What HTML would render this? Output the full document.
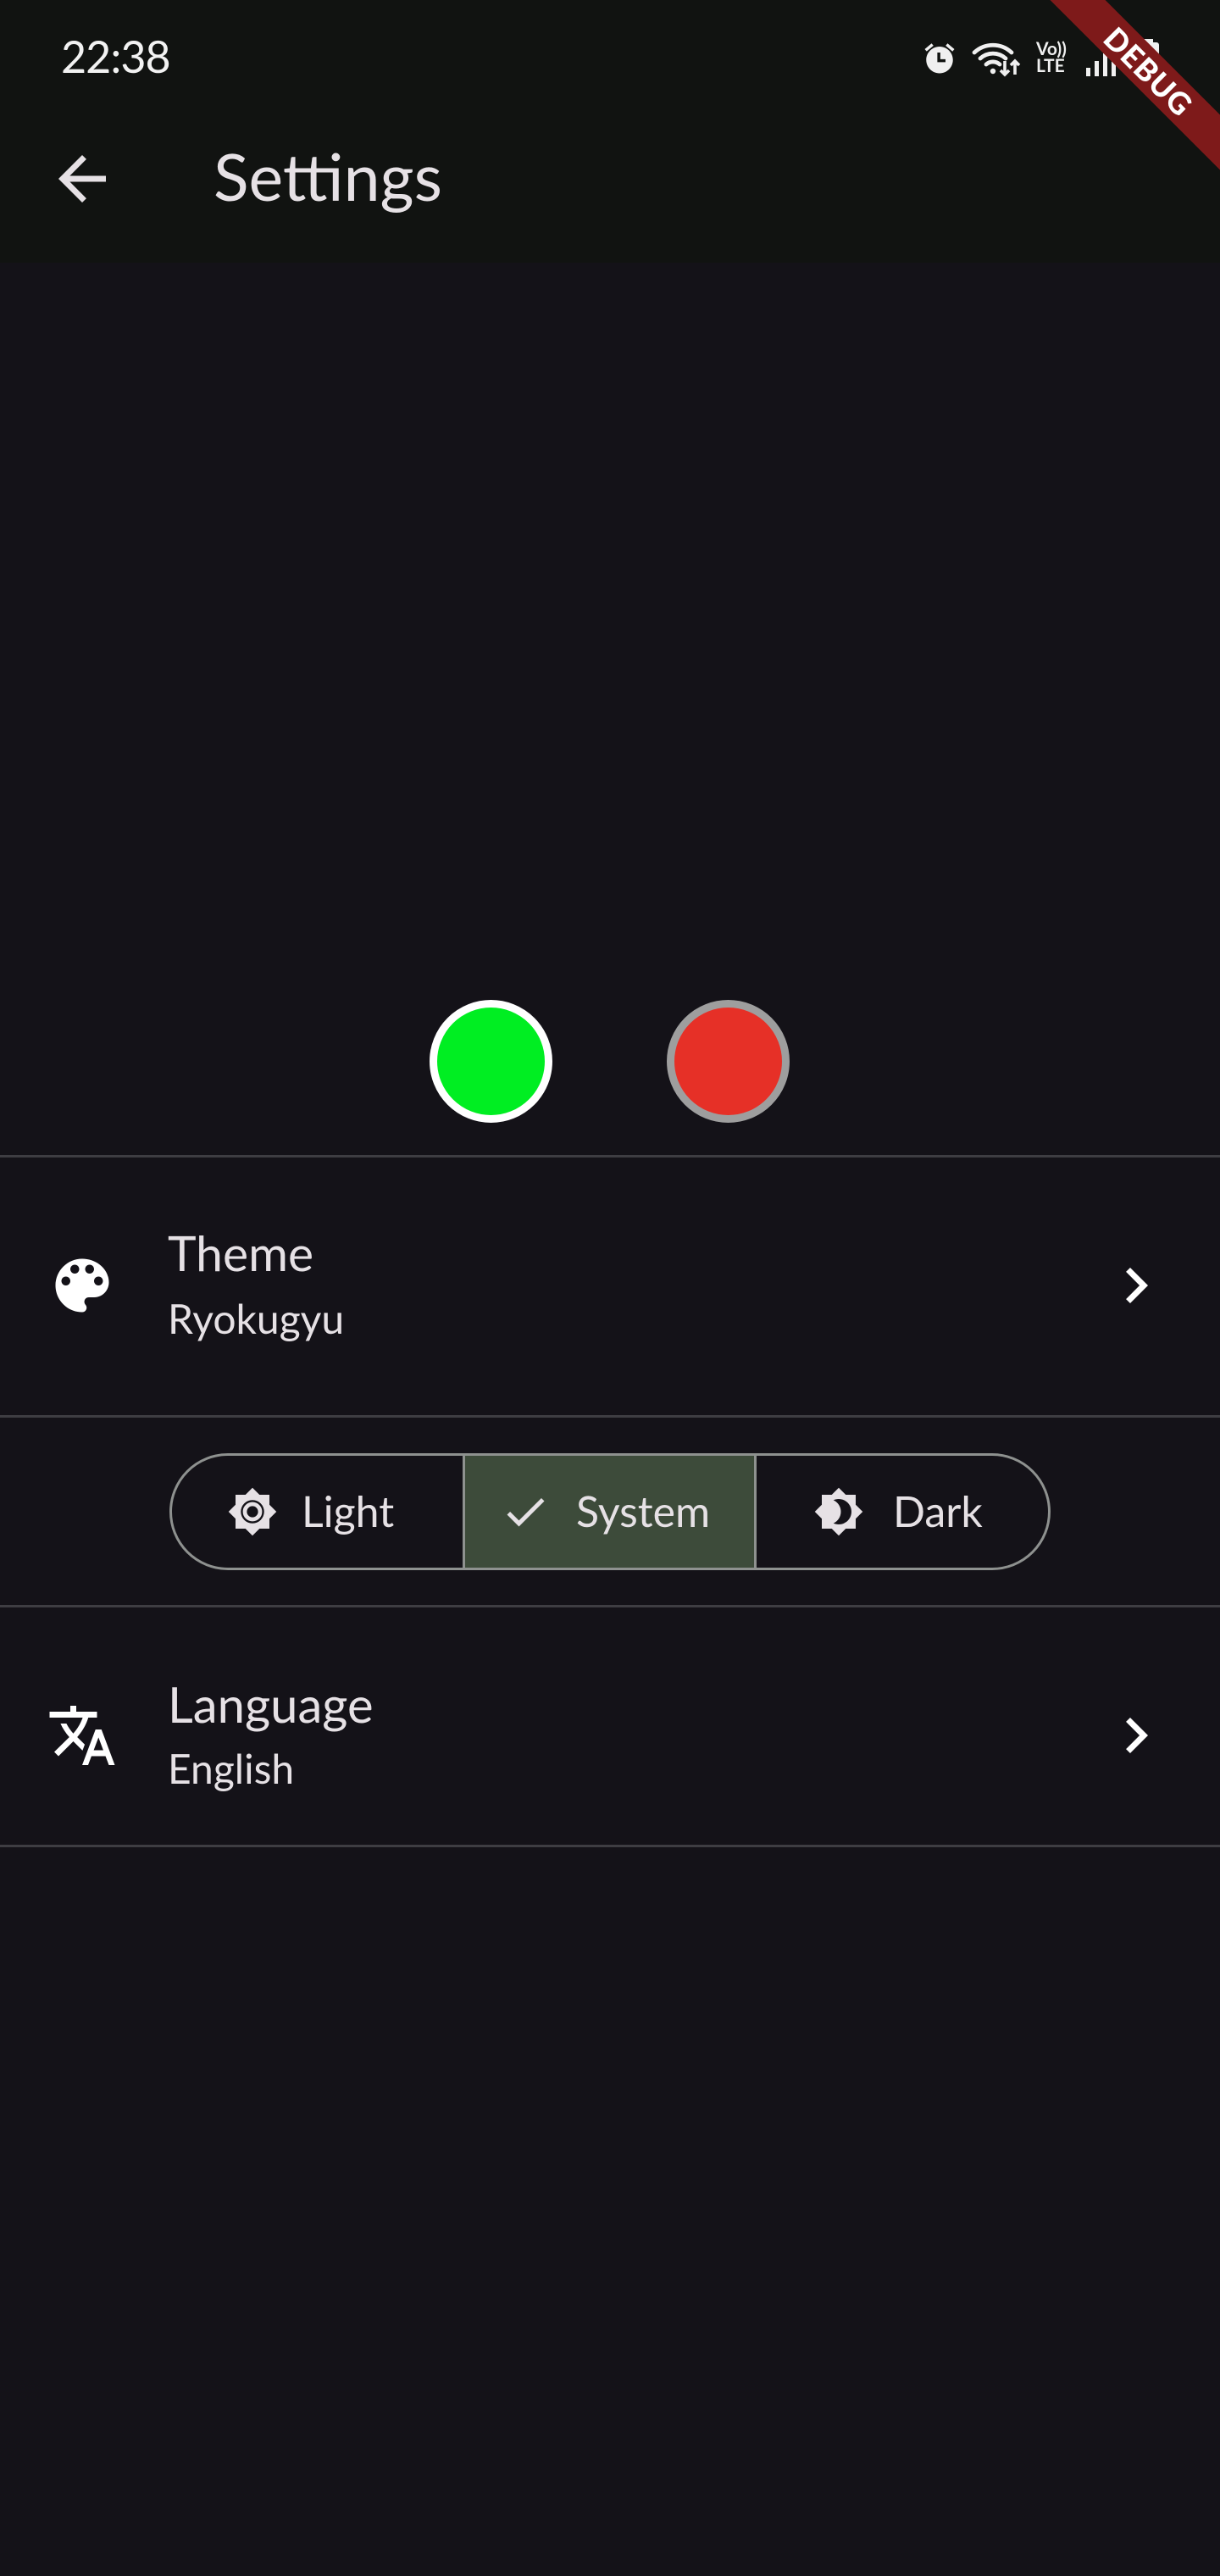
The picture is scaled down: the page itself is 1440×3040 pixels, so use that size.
<!DOCTYPE html>
<html><head><meta charset="utf-8">
<style>
*{margin:0;padding:0;box-sizing:border-box}
body{width:1440px;height:3040px;background:#141218;position:relative;overflow:hidden;font-family:"Lato","Liberation Sans",sans-serif;color:#e6e1e5}
.abs{position:absolute}
.appbar{left:0;top:0;width:1440px;height:310px;background:#111311}
.div{left:0;width:1440px;height:3px;background:#3e3d42}
.t{white-space:nowrap;line-height:1}
</style></head><body>
<div class="abs appbar"></div>
<div class="abs t" style="left:72px;top:41px;font-size:52px;color:#f2f2f2;letter-spacing:-1px">22:38</div>
<!-- status icons -->
<svg class="abs" style="left:1088px;top:48px" width="42" height="42" viewBox="0 0 24 24"><path fill="#f0f0f0" d="M22 5.72l-4.6-3.86-1.29 1.53 4.6 3.86L22 5.72zM7.88 3.39L6.6 1.86 2 5.71l1.29 1.53 4.59-3.85zM12 4c-4.97 0-9 4.03-9 9s4.02 9 9 9c4.97 0 9-4.03 9-9s-4.03-9-9-9z"/><path d="M11.5 8v5.5H16" stroke="#111311" stroke-width="2" fill="none"/></svg>
<svg class="abs" style="left:1146px;top:48px" width="60" height="44" viewBox="0 0 30 22"><path d="M2 7a16 16 0 0 1 22 0M5.5 10.5a11 11 0 0 1 15 0M9 14a6 6 0 0 1 8 0" stroke="#f0f0f0" stroke-width="2.4" fill="none" stroke-linecap="round"/><circle cx="13" cy="18" r="1.6" fill="#f0f0f0"/><path d="M20 12v8M17.5 17.5l2.5 2.5 2.5-2.5M26 20v-8M23.5 14.5l2.5-2.5 2.5 2.5" stroke="#f0f0f0" stroke-width="1.8" fill="none"/></svg>
<div class="abs t" style="left:1223px;top:48px;font-size:21px;font-weight:bold;color:#f0f0f0;line-height:20px">Vo))<br>LTE</div>
<svg class="abs" style="left:1282px;top:54px" width="40" height="36" viewBox="0 0 40 36"><rect x="0" y="26" width="5" height="10" fill="#f0f0f0"/><rect x="10" y="18" width="5" height="18" fill="#f0f0f0"/><rect x="20" y="9" width="5" height="27" fill="#f0f0f0"/><rect x="30" y="0" width="5" height="36" fill="#f0f0f0"/></svg>
<svg class="abs" style="left:1340px;top:46px" width="30" height="48" viewBox="0 0 30 48"><rect x="9" y="0" width="12" height="5" fill="#f0f0f0"/><rect x="2" y="4" width="26" height="44" rx="3" fill="#f0f0f0"/></svg>
<!-- debug banner -->
<div class="abs t" style="left:1156px;top:61px;width:400px;height:46px;background:#7e1a1a;transform:rotate(45deg);color:#fff;font-weight:900;font-size:36px;text-align:center;line-height:46px;letter-spacing:1px">DEBUG</div>
<!-- app bar -->
<svg class="abs" style="left:55px;top:169px" width="84" height="84" viewBox="0 0 24 24"><path fill="#e6e1e5" d="M20 11H7.83l5.59-5.59L12 4l-8 8 8 8 1.41-1.41L7.83 13H20v-2z"/></svg>
<div class="abs t" style="left:252px;top:170px;font-size:77px;color:#e6e1e5">Settings</div>
<!-- circles -->
<div class="abs" style="left:507px;top:1180px;width:145px;height:145px;border-radius:50%;background:#00ee22;border:9px solid #fff"></div>
<div class="abs" style="left:787px;top:1180px;width:145px;height:145px;border-radius:50%;background:#e63027;border:9px solid #9e9e9e"></div>
<div class="abs div" style="top:1363px"></div>
<!-- theme -->
<svg class="abs" style="left:55px;top:1475px" width="84" height="84" viewBox="0 0 24 24"><path fill="#fff" fill-rule="evenodd" d="M12 3c-4.97 0-9 4.03-9 9s4.03 9 9 9c.83 0 1.5-.67 1.5-1.5 0-.39-.15-.74-.39-1.01-.23-.26-.38-.61-.38-.99 0-.83.67-1.5 1.5-1.5H16c2.76 0 5-2.24 5-5 0-4.42-4.03-8-9-8zM6.5 12c-.83 0-1.5-.67-1.5-1.5S5.67 9 6.5 9 8 9.67 8 10.5 7.33 12 6.5 12zM9.5 8C8.67 8 8 7.33 8 6.5S8.67 5 9.5 5s1.5.67 1.5 1.5S10.33 8 9.5 8zM14.5 8c-.83 0-1.5-.67-1.5-1.5S13.67 5 14.5 5s1.5.67 1.5 1.5S15.33 8 14.5 8zM17.5 12c-.83 0-1.5-.67-1.5-1.5S16.67 9 17.5 9s1.5.67 1.5 1.5-.67 1.5-1.5 1.5z"/></svg>
<div class="abs t" style="left:198px;top:1451px;font-size:57px">Theme</div>
<div class="abs t" style="left:198px;top:1533px;font-size:48px;color:#e6e1e5">Ryokugyu</div>
<svg class="abs" style="left:1299px;top:1475px" width="84" height="84" viewBox="0 0 24 24"><path fill="#fff" d="M10 6L8.59 7.41 13.17 12l-4.58 4.59L10 18l6-6z"/></svg>
<div class="abs div" style="top:1670px"></div>
<!-- segmented -->
<div class="abs" style="left:200px;top:1715px;width:1040px;height:138px;border:3px solid #8e918f;border-radius:69px;overflow:hidden">
  <div class="abs" style="left:343px;top:0;width:347px;height:132px;background:#3d4b3a;border-left:3px solid #8e918f;border-right:3px solid #8e918f"></div>
</div>
<svg class="abs" style="left:268px;top:1754px" width="60" height="60" viewBox="0 0 24 24"><path fill="#e6e1e5" d="M20 15.31L23.31 12 20 8.69V4h-4.69L12 .69 8.69 4H4v4.69L.69 12 4 15.31V20h4.69L12 23.31 15.31 20H20v-4.69z"/><circle cx="12" cy="12" r="5.5" fill="#141218"/><circle cx="12" cy="12" r="3.6" fill="none" stroke="#e6e1e5" stroke-width="1.9"/></svg>
<div class="abs t" style="left:356px;top:1758px;font-size:50px">Light</div>
<svg class="abs" style="left:590px;top:1754px" width="60" height="60" viewBox="0 0 24 24"><path fill="#e6e1e5" d="M9 16.17L4.83 12l-1.42 1.41L9 19 21 7l-1.41-1.41z"/></svg>
<div class="abs t" style="left:680px;top:1758px;font-size:50px">System</div>
<svg class="abs" style="left:960px;top:1754px" width="60" height="60" viewBox="0 0 24 24"><path fill="#e6e1e5" d="M20 8.69V4h-4.69L12 .69 8.69 4H4v4.69L.69 12 4 15.31V20h4.69L12 23.31 15.31 20H20v-4.69L23.31 12 20 8.69zM12 18c-.89 0-1.74-.2-2.5-.55C11.56 16.5 13 14.42 13 12s-1.44-4.5-3.5-5.45C10.26 6.2 11.11 6 12 6c3.31 0 6 2.69 6 6s-2.69 6-6 6z"/></svg>
<div class="abs t" style="left:1054px;top:1758px;font-size:50px">Dark</div>
<div class="abs div" style="top:1894px"></div>
<!-- language -->
<svg class="abs" style="left:55px;top:2006px" width="84" height="84" viewBox="0 0 24 24"><path fill="#fff" d="M12.87 15.07l-2.54-2.51.03-.03c1.74-1.94 2.98-4.17 3.71-6.53H17V4h-7V2H8v2H1v1.99h11.17C11.5 7.92 10.44 9.75 9 11.35 8.07 10.32 7.3 9.190 6.69 8h-2c.73 1.63 1.73 3.17 2.98 4.56l-5.09 5.02L4 19l5-5 3.11 3.11.76-2.04zM18.5 10h-2L12 22h2l1.12-3h4.75L21 22h2l-4.5-12zm-2.62 7l1.62-4.33L19.12 17h-3.24z"/></svg>
<div class="abs t" style="left:198px;top:1983px;font-size:58px">Language</div>
<div class="abs t" style="left:198px;top:2064px;font-size:48px;color:#e6e1e5">English</div>
<svg class="abs" style="left:1299px;top:2006px" width="84" height="84" viewBox="0 0 24 24"><path fill="#fff" d="M10 6L8.59 7.41 13.17 12l-4.58 4.59L10 18l6-6z"/></svg>
<div class="abs div" style="top:2177px"></div>
</body></html>
